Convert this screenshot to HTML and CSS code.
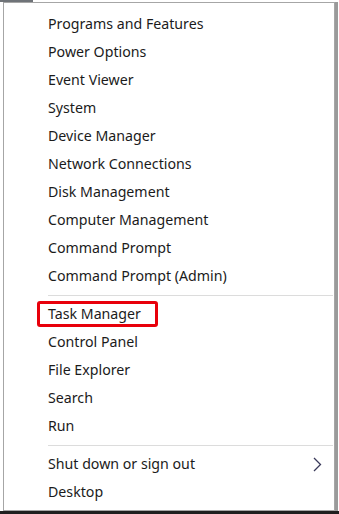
FILE: index.html
```html
<!DOCTYPE html>
<html lang="en">
<head>
  <meta charset="UTF-8" />
  <title>Quick Link Menu</title>
  <link rel="stylesheet" href="styles.css">
</head>
<body>
  <div class="topstrip"></div>
  <div class="menu">
    <ul class="group">
      <li>Programs and Features</li>
      <li>Power Options</li>
      <li>Event Viewer</li>
      <li>System</li>
      <li>Device Manager</li>
      <li>Network Connections</li>
      <li>Disk Management</li>
      <li>Computer Management</li>
      <li>Command Prompt</li>
      <li>Command Prompt (Admin)</li>
    </ul>
    <div class="sep"></div>
    <ul class="group">
      <li><span class="marked">Task Manager</span></li>
      <li>Control Panel</li>
      <li>File Explorer</li>
      <li>Search</li>
      <li>Run</li>
    </ul>
    <div class="sep"></div>
    <ul class="group">
      <li class="sub">Shut down or sign out
        <svg class="chev" width="9" height="15" viewBox="0 0 9 15"><path d="M1 1 L7.5 7.5 L1 14" fill="none" stroke="#3a3a5a" stroke-width="1.3"/></svg>
      </li>
      <li>Desktop</li>
    </ul>
  </div>
  <div class="taskbar"></div>
</body>
</html>
```

FILE: styles.css
```css
body { margin: 0; background: #fff; font-family: "Noto Sans", "Open Sans", sans-serif; width: 339px; height: 514px; overflow: hidden; }
.topstrip { width: 33px; height: 2px; background: #6f7378; }
.menu { margin-left: 3px; width: 332px; height: 509px; border: 1px solid #a6a6a6; background: #fff; box-shadow: 3px 0 0 #9a9a9a; box-sizing: border-box; padding: 7px 0 0 44px; }
.group { list-style: none; margin: 0; padding: 0; }
.group li { height: 28px; line-height: 28px; font-size: 14.2px; color: #1b1b1b; white-space: nowrap; position: relative; }
.sep { height: 1px; background: #dcdcdc; margin: 5px 1px 4px 0; }
.marked { position: relative; }
.marked::before { content: ""; position: absolute; left: -11px; right: -17px; top: -3px; bottom: -4px; border: 3px solid #e8000b; border-radius: 3px; }
.chev { position: absolute; right: 12px; top: 7px; }
.taskbar { height: 5px; background: #1f1f1f; }
```
